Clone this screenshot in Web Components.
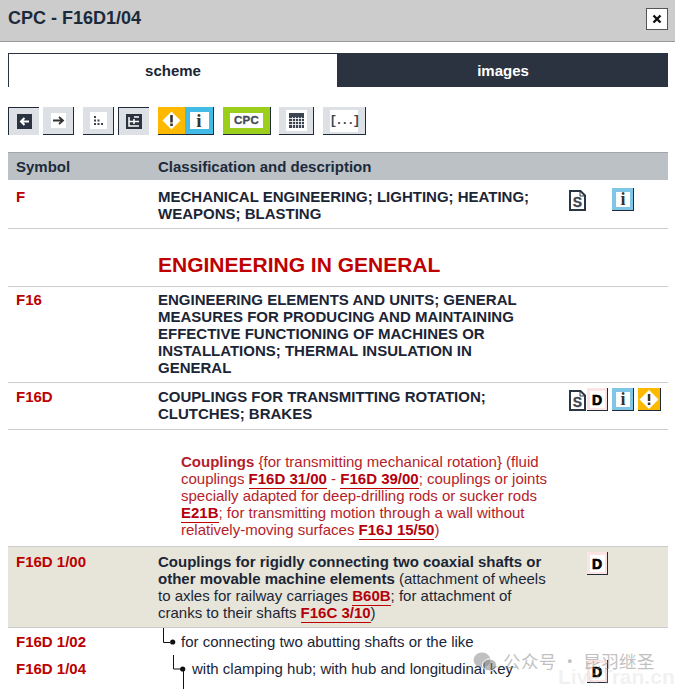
<!DOCTYPE html>
<html lang="en"><head><meta charset="utf-8"><title>CPC - F16D1/04</title>
<style>
html,body{margin:0;padding:0;height:689px;overflow:hidden;background:#fff}
body{font:15px/17px "Liberation Sans",Arial,sans-serif;color:#1b2536}
</style></head><body>
<cpc-dialog>
<cpc-header slot="head">CPC - F16D1/04</cpc-header>
<cpc-tabs></cpc-tabs>
<cpc-toolbar></cpc-toolbar>
<cpc-table>
  <cpc-row caps sym="F" h="49" pt="8" ipt="8" icons="s,,i">MECHANICAL ENGINEERING; LIGHTING; HEATING; WEAPONS; BLASTING</cpc-row>
  <cpc-title>ENGINEERING IN GENERAL</cpc-title>
  <cpc-row caps sym="F16" h="96" pt="4">ENGINEERING ELEMENTS AND UNITS; GENERAL MEASURES FOR PRODUCING AND MAINTAINING EFFECTIVE FUNCTIONING OF MACHINES OR INSTALLATIONS; THERMAL INSULATION IN GENERAL</cpc-row>
  <cpc-row caps sym="F16D" h="47" pt="5" ipt="5" icons="s,d,i,w">COUPLINGS FOR TRANSMITTING ROTATION; CLUTCHES; BRAKES</cpc-row>
  <cpc-note><b>Couplings</b> {for transmitting mechanical rotation} (fluid couplings <cpc-ref>F16D 31/00</cpc-ref> - <cpc-ref>F16D 39/00</cpc-ref>; couplings or joints specially adapted for deep-drilling rods or sucker rods <cpc-ref>E21B</cpc-ref>; for transmitting motion through a wall without relatively-moving surfaces <cpc-ref>F16J 15/50</cpc-ref>)</cpc-note>
  <cpc-row sym="F16D 1/00" h="82" pt="6" ipt="5" hl icons=",d"><b>Couplings for rigidly connecting two coaxial shafts or other movable machine elements</b> (attachment of wheels to axles for railway carriages <cpc-ref>B60B</cpc-ref>; for attachment of cranks to their shafts <cpc-ref>F16C 3/10</cpc-ref>)</cpc-row>
  <cpc-tree-row sym="F16D 1/02" level="0">for connecting two abutting shafts or the like</cpc-tree-row>
  <cpc-tree-row sym="F16D 1/04" level="1" icons=",d">with clamping hub; with hub and longitudinal key</cpc-tree-row>
</cpc-table>
<cpc-watermark></cpc-watermark>
</cpc-dialog>
<script>
const def=(name,html)=>{customElements.define(name,class extends HTMLElement{
  connectedCallback(){ if(this.shadowRoot)return; const r=this.attachShadow({mode:'open'}); r.innerHTML=typeof html==='function'?html(this):html; }
});};
const glyph={
 s:`<svg width="17" height="21" viewBox="0 0 17 21"><path d="M1 1H11.500L16 5.500V20H1Z" fill="#fff" stroke="#2b3642" stroke-width="2"/><path d="M11 1V6H16" fill="none" stroke="#2b3642"/><text x="8.500" y="16.500" text-anchor="middle" font-family="Liberation Sans" font-weight="700" font-size="14" stroke="#3b4450" stroke-width=".3" fill="#3b4450">S</text></svg>`,
 d:`<svg width="21" height="23" viewBox="0 0 21 23"><rect width="21" height="23" fill="#fde4e4"/><rect x="3" y="3" width="15" height="17" fill="#fff"/><path d="M21 0V23H0V22H20V0Z" fill="#1f2a3a"/><text x="10" y="16.500" text-anchor="middle" font-family="Liberation Sans" font-weight="700" font-size="14" stroke="#000" stroke-width=".7" fill="#000">D</text></svg>`,
 i:`<svg width="22" height="23" viewBox="0 0 22 23"><rect width="22" height="23" fill="#80c6e6"/><rect x="4" y="4" width="14" height="15" fill="#fff"/><path d="M22 0V23H0V22H21V0Z" fill="#1f2a3a"/><text x="11" y="17" text-anchor="middle" font-family="Liberation Serif" font-weight="700" font-size="18" fill="#333">i</text></svg>`,
 w:`<svg width="23" height="23" viewBox="0 0 23 23"><rect width="23" height="23" fill="#fdb900"/><path d="M11 2L20.500 11.500L11 21L1.500 11.500Z" fill="#fff"/><path d="M23 0V23H0V22H22V0Z" fill="#1f2a3a"/><rect x="9.800" y="6" width="2.500" height="7" fill="#333"/><rect x="9.800" y="14.500" width="2.500" height="2.500" fill="#333"/></svg>`
};
const iconCell=(list)=>{
  if(list==null)return '';
  const p=list.split(',');
  return `<div class="icons">`+p.map((k,n)=>k?`<span class="ic ${k}">${glyph[k]}</span>`:`<span class="sp sp${n}"></span>`).join('')+`</div>`;
};
const rowCss=`
 .icons{display:flex;align-items:flex-start;height:23px}
 .ic{display:block;height:23px}.ic svg{display:block}
 .ic.s{width:17px;margin:2px 1px 0 0}.ic.d{width:21px}.ic.i{width:22px;margin-left:4px}.ic.w{width:23px;margin-left:4px}
 .sp0{width:18px}.sp1{width:21px}
`;
def('cpc-dialog',`<style>:host{display:block;position:relative;width:675px;height:689px;overflow:hidden}</style><slot name="head"></slot><slot></slot>`);
def('cpc-header',`<style>:host{display:flex;align-items:center;justify-content:space-between;box-sizing:border-box;height:42px;padding:0 7px 0 8px;background:#ccc;border-bottom:1px solid #999;font-weight:700;color:#1b2a3b}
 .t{font-size:18px;margin-bottom:5px}
 .x{box-sizing:border-box;width:22px;height:22px;margin-bottom:3px;background:#fff;border:1px solid #555;display:flex;align-items:center;justify-content:center}</style>
 <span class="t"><slot></slot></span><span class="x"><svg width="10" height="10" viewBox="0 0 10 10"><path d="M1.500 1.500L8.500 8.500M8.500 1.500L1.500 8.500" stroke="#111" stroke-width="2.400"/></svg></span>`);
def('cpc-tabs',`<style>:host{display:grid;grid-template-columns:330px 330px;margin:11px 0 0 8px;height:34px;font-weight:700;font-size:15px}
 div{display:flex;align-items:center;justify-content:center;box-sizing:border-box}
 .on{background:#fff;border:1px solid #2b3340;border-bottom:0;color:#1b2536}.off{background:#2b3340;color:#fff}</style>
 <div class="on">scheme</div><div class="off">images</div>`);
const B=(cls,inner,w,bg,sel)=>`<cpc-btn class="${cls}" style="width:${w}px;--bg:${bg}" ${sel?'sel':''}>${inner}</cpc-btn>`;
const pad=(w,h,inner)=>`<svg width="${w}" height="${h}" viewBox="0 0 ${w} ${h}" style="display:block">${inner}</svg>`;
def('cpc-btn',`<style>:host{box-sizing:border-box;display:flex;align-items:center;justify-content:center;height:28px;background:var(--bg,#dde0e5);border-style:solid;border-color:#1f2a3a;border-width:0 1px 1px 0}
 :host([sel]){border-width:1px 0 0 1px;border-color:#1f2a3a}</style><slot></slot>`);
def('cpc-toolbar',`<style>:host{display:flex;margin:20px 0 0 8px;height:28px}
 .g1{margin-left:4px}.g2{margin-left:9px}.g3{margin-left:8px}
 .seg{display:flex}
 cpc-btn{flex:none}
 .wrap{width:17px;height:17px;background:#fff;display:flex;align-items:center;justify-content:center}
 </style>
 ${B('',pad(15,15,`<rect width="15" height="15" fill="#2b3340"/><path d="M12 7.500H5M7.500 4L4 7.500L7.500 11" fill="none" stroke="#fff" stroke-width="2"/>`),31,'#dde0e5',1)}
 ${B('g1',`<div class="wrap" style="width:15px;height:15px">${pad(13,13,`<path d="M1 6.500H10M7 3L11 6.500L7 10" fill="none" stroke="#333" stroke-width="1.800"/>`)}</div>`,31,'#dde0e5')}
 ${B('g2',`<div class="wrap">${pad(13,13,`<path d="M2 2h2v2H2zM2 5.500h2v2H2zM5.500 5.500h2v2h-2zM2 9h2v2H2zM5.500 9h2v2h-2zM9 9h2v2H9z" fill="#3b4450"/>`)}</div>`,31,'#dde0e5')}
 ${B('g1',pad(16,15,`<rect width="16" height="15" fill="#2b3340"/><path d="M3 3V12H13M3 7.500H13M8 5V10M8 3H13" fill="none" stroke="#fff" stroke-width="1.500"/>`),31,'#dde0e5',1)}
 <div class="seg g2"><cpc-btn style="width:27px;--bg:#fdb900;border-width:0 0 1px 0">${pad(19,19,`<path d="M9.500 .500L18.500 9.500L9.500 18.500L.500 9.500Z" fill="#fff"/><rect x="8.200" y="4" width="2.600" height="7.500" fill="#333"/><rect x="8.200" y="12.500" width="2.600" height="2.500" fill="#333"/>`)}</cpc-btn>
 <cpc-btn style="width:29px;--bg:#42bbe6"><span style="display:flex;width:19px;height:17px;background:#fff;align-items:center;justify-content:center;font:700 19px/17px 'Liberation Serif',serif;color:#333">i</span></cpc-btn></div>
 <cpc-btn class="g2" style="width:48px;--bg:#9ccf1b"><span style="display:flex;width:33px;height:15px;background:#fff;align-items:center;justify-content:center;font:700 11.500px/15px 'Liberation Sans',sans-serif;letter-spacing:.3px;color:#444b55;-webkit-text-stroke:.3px #444b55">CPC</span></cpc-btn>
 ${B('g3',`<div class="wrap" style="width:21px;height:21px">${pad(15,15,`<rect width="15" height="15" fill="#3b4450"/><path d="M0 5.500H15M0 8.500H15M0 11.500H15M3.500 4V15M6.500 4V15M9.500 4V15M12.500 4V15" stroke="#fff" stroke-width=".8"/>`)}</div>`,35,'#dde0e5')}
 ${B('g2',`<span style="display:flex;width:28px;height:22px;background:#fff;align-items:center;justify-content:center;font:700 12.500px/20px 'Liberation Mono',monospace;letter-spacing:-1.700px;color:#3b4450">[...]</span>`,43,'#dde0e5')}`);
def('cpc-table',`<style>:host{display:block;margin:17px 7px 0 8px;width:660px}
 .hd{display:grid;grid-template-columns:150px 1fr;align-items:center;height:28px;box-sizing:border-box;background:#bcc1c5;border-top:1px solid #a3a7ab;font-weight:700;font-size:15px;color:#1b2a3b}
 .hd span:first-child{padding-left:8px}
 </style><div class="hd"><span>Symbol</span><span>Classification and description</span></div><slot></slot>`);
def('cpc-row',t=>{const pt=t.getAttribute('pt')||8,ipt=t.getAttribute('ipt')||8,hl=t.hasAttribute('hl');return `<style>:host{display:grid;grid-template-columns:150px 402px 1fr;box-sizing:border-box;height:${t.getAttribute('h')}px;border-bottom:1px solid #ccc;${hl?'background:#e7e5d9;border-top:1px solid #ccc;':''}}
 .sym{padding:${pt}px 0 0 8px;font-weight:700;color:#bb0000}
 .txt{padding-top:${pt}px}
 :host([hl]) .txt{padding-right:6px}
 :host([caps]) .txt{font-weight:700;padding-right:20px}
 .ico{padding:${ipt}px 0 0 9px}
 ${rowCss}</style>
 <div class="sym">${t.getAttribute('sym')}</div><div class="txt"><slot></slot></div><div class="ico">${iconCell(t.getAttribute('icons'))}</div>`});
def('cpc-title',`<style>:host{display:flex;align-items:flex-end;box-sizing:border-box;height:58px;padding:0 0 9px 150px;border-bottom:1px solid #ccc;font-weight:700;font-size:21px;line-height:24px;color:#bf0000}</style><slot></slot>`);
def('cpc-note',`<style>:host{display:block;box-sizing:border-box;height:116px;padding:23px 118px 0 173px;color:#b51d2a}</style><slot></slot>`);
def('cpc-ref',`<style>:host{display:inline;font-weight:700;color:#b5000c;border-bottom:1px solid #c00000;padding-bottom:1px}</style><slot></slot>`);
def('cpc-tree-row',t=>{const l=+t.getAttribute('level');const h=l?34:27;return `<style>:host{display:grid;grid-template-columns:150px 402px 1fr;height:${h}px}
 .sym{padding-top:5px;padding-left:8px;font-weight:700;color:#bb0000}
 .txt{display:flex;align-items:flex-start;padding-top:5px}
 svg.t{flex:none;margin:-5px 0 0 ${l?12:1}px;display:block}
 .ico{padding:5px 0 0 9px}
 ${rowCss}</style>
 <div class="sym">${t.getAttribute('sym')}</div>
 <div class="txt"><svg class="t" width="22" height="${h}" viewBox="0 0 22 ${h}"><path d="${l?'M3.500 0V14H11M13.500 16V34':'M4.500 0V14.500H11'}" fill="none" stroke="#111" stroke-width="1"/><circle cx="${l?12.7:13.7}" cy="14" r="2.600" fill="#111"/></svg><span><slot></slot></span></div>
 <div class="ico">${iconCell(t.getAttribute('icons'))}</div>`});
def('cpc-watermark',`<style>:host{position:absolute;left:472px;top:649px;width:203px;height:40px;pointer-events:none;font-family:"Noto Sans CJK SC","Liberation Sans",sans-serif;color:rgba(130,130,130,.5)}
 .a{position:absolute;left:31px;top:-1px;font-size:17.500px;line-height:26px;white-space:nowrap;letter-spacing:.4px}
 svg{position:absolute;left:1px;top:3px}
 .b{position:absolute;left:86px;top:16px;font:700 21px/24px "Liberation Sans",sans-serif;color:rgba(200,200,200,.25);white-space:nowrap}</style>
 <svg width="24" height="20" viewBox="0 0 24 20"><ellipse cx="9" cy="8" rx="8.500" ry="7.500" fill="rgba(130,130,130,.5)"/><ellipse cx="16.500" cy="13" rx="7" ry="6" fill="rgba(130,130,130,.55)" stroke="#fff"/></svg>
 <div class="b">LiveTran.cn</div><div class="a">公众号 · 昆羽继圣</div>`);
</script>
</body></html>
